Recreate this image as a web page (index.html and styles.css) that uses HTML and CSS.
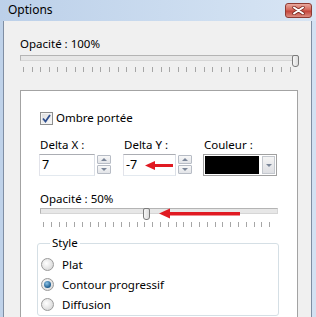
FILE: index.html
```html
<!DOCTYPE html>
<html lang="fr">
<head>
    <meta charset="UTF-8">
    <title>Options</title>
    <link rel="stylesheet" href="styles.css">
</head>
<body>
    <div class="window">
        <div class="titlebar">
            <span class="title">Options</span>
            <div class="close">
                <svg width="13" height="9" viewBox="0 0 13 9">
                    <path d="M2 1.5 L11 7.5 M11 1.5 L2 7.5" stroke="#7a2a22" stroke-width="3.4" stroke-linecap="round"/>
                    <path d="M2 1.5 L11 7.5 M11 1.5 L2 7.5" stroke="#ffffff" stroke-width="2" stroke-linecap="round"/>
                </svg>
            </div>
        </div>

        <div class="client">
            <div class="label">Opacité : 100%</div>
            <div class="slider slider-main">
                <div class="track"></div>
                <div class="thumb" style="left: 272px"></div>
                <div class="ticks"></div>
            </div>

            <div class="panel">
                <label class="check">
                    <span class="checkbox">
                        <svg width="9" height="9" viewBox="0 0 9 9">
                            <path d="M1 4.5 L3.5 7.5 L8 1" fill="none" stroke="#2f4f8f" stroke-width="1.8"/>
                        </svg>
                    </span>
                    Ombre portée
                </label>

                <div class="fields">
                    <div class="col col-x">
                        <div class="label">Delta X :</div>
                        <div class="spin">
                            <div class="input">7</div>
                            <div class="spin-btns">
                                <span class="spin-btn"><i class="up"></i></span>
                                <span class="spin-btn"><i class="down"></i></span>
                            </div>
                        </div>
                    </div>
                    <div class="col col-y">
                        <div class="label">Delta Y :</div>
                        <div class="spin">
                            <div class="input">-7</div>
                            <div class="spin-btns">
                                <span class="spin-btn"><i class="up"></i></span>
                                <span class="spin-btn"><i class="down"></i></span>
                            </div>
                        </div>
                    </div>
                    <div class="col col-color">
                        <div class="label">Couleur :</div>
                        <div class="color">
                            <div class="swatch"></div>
                            <div class="drop"><i class="down"></i></div>
                        </div>
                    </div>
                </div>

                <div class="label label-sub">Opacité : 50%</div>
                <div class="slider slider-sub">
                    <div class="track"></div>
                    <div class="thumb" style="left: 103px"></div>
                    <div class="ticks"></div>
                </div>

                <fieldset class="group">
                    <legend>Style</legend>
                    <label class="radio"><span class="dot"></span>Plat</label>
                    <label class="radio"><span class="dot checked"></span>Contour progressif</label>
                    <label class="radio"><span class="dot"></span>Diffusion</label>
                </fieldset>

                <!-- annotation arrows -->
                <svg class="arrow arrow-y" width="28" height="11" viewBox="0 0 28 11">
                    <path d="M0 5.5 L10 1 L10 10 Z" fill="#e01a22"/>
                    <rect x="9" y="4" width="19" height="3" fill="#e01a22"/>
                </svg>
                <svg class="arrow arrow-op" width="81" height="11" viewBox="0 0 81 11">
                    <path d="M0 5.5 L11 0.5 L11 10.5 Z" fill="#e01a22"/>
                    <rect x="10" y="4" width="71" height="3.5" fill="#e01a22"/>
                </svg>
            </div>
        </div>
    </div>
</body>
</html>
```

FILE: styles.css
```css
/* Base */
* {
    margin: 0;
    padding: 0;
    box-sizing: border-box;
}

body {
    font-family: 'Noto Sans', 'Open Sans', sans-serif;
    font-size: 11.5px;
    color: #000000;
    background-color: #cfdcec;
}

/* Window frame */
.window {
    width: 316px;
    height: 317px;
    overflow: hidden;
    display: flex;
    flex-direction: column;
    background: linear-gradient(to right, #bfd2e9, #d3e1f2);
}

.titlebar {
    height: 21px;
    flex: none;
    display: flex;
    align-items: center;
    justify-content: space-between;
    padding: 0 4px 0 8px;
    background: linear-gradient(to right, #bcd0e9, #cfdff1 70%, #d8e5f4);
}

.title {
    line-height: 16px;
    margin-top: -1px;
    font-size: 12px;
}

.close {
    width: 27px;
    height: 15px;
    border: 1px solid #8e3a32;
    border-radius: 3px;
    display: flex;
    align-items: center;
    justify-content: center;
    background: linear-gradient(#e9a99e, #d4675a 45%, #c3443a 55%, #dc8c80);
}

.client {
    flex: 1;
    margin: 0 4px 0 3px;
    border-left: 1px solid #7f8ea3;
    border-right: 1px solid #7f8ea3;
    background-color: #f0f0f0;
    padding: 15px 13px 0 16px;
    overflow: hidden;
}

.label {
    line-height: 16px;
    height: 16px;
}

/* Sliders */
.slider {
    position: relative;
    height: 21px;
}

.slider-main {
    margin-top: 1px;
}

.track {
    height: 6px;
    margin-top: 3px;
    border: 1px solid #b4b4b4;
    border-right-color: #d6d6d6;
    border-bottom-color: #d6d6d6;
    background-color: #e7e7e7;
}

.ticks {
    height: 5px;
    margin: 6px 2px 0 3px;
    background: repeating-linear-gradient(to right, #a6a6a6 0, #a6a6a6 1px, transparent 1px, transparent 8.6px);
}

.thumb {
    position: absolute;
    top: 0;
    width: 7px;
    height: 12px;
    border: 1px solid #7b7b7b;
    border-radius: 2px 2px 3px 3px;
    background: linear-gradient(to right, #f6f6f6, #dcdcdc);
}

/* Inner panel */
.panel {
    position: relative;
    margin-top: 14px;
    height: 260px;
    background-color: #ffffff;
    border: 1px solid #a3a3a3;
    padding: 19px 0 0 18px;
}

.check {
    display: flex;
    align-items: center;
    gap: 3px;
    margin-left: 1px;
    line-height: 16px;
}

.checkbox {
    width: 13px;
    height: 13px;
    border: 1px solid #8e8f8f;
    background: linear-gradient(135deg, #dcdcdc, #fbfbfb);
    display: flex;
    align-items: center;
    justify-content: center;
    box-shadow: inset 0 0 0 1px #f4f4f4;
}

.fields {
    display: flex;
    margin-top: 11px;
}

.col .label {
    padding-left: 1px;
}

.col-x {
    width: 84px;
}

.col-y {
    width: 80px;
}

.spin {
    display: flex;
    margin-top: 1px;
}

.input {
    height: 22px;
    border: 1px solid #abadb3;
    border-left-color: #e2e3ea;
    border-right-color: #dbdfe6;
    border-bottom-color: #e3e9ef;
    padding-left: 2px;
    line-height: 20px;
    font-size: 12.5px;
}

.col-x .input {
    width: 56px;
}

.col-y .input {
    width: 53px;
}

.spin-btns {
    display: flex;
    flex-direction: column;
    gap: 1px;
    margin-left: 2px;
    padding-top: 1px;
}

.spin-btn {
    width: 14px;
    height: 9px;
    border: 1px solid #b7bcc5;
    border-radius: 1px;
    background: linear-gradient(#f8f8f8, #e2e4e8);
    display: flex;
    align-items: center;
    justify-content: center;
}

.up, .down {
    width: 0;
    height: 0;
    border-left: 3px solid transparent;
    border-right: 3px solid transparent;
}

.up {
    border-bottom: 3px solid #7a8598;
}

.down {
    border-top: 3px solid #7a8598;
}

.color {
    display: flex;
    gap: 3px;
    width: 74px;
    height: 22px;
    margin-top: 1px;
    padding: 1px;
    border: 1px solid #a0a0a0;
}

.swatch {
    width: 54px;
    background-color: #000000;
}

.drop {
    width: 13px;
    border: 1px solid #c4c8ce;
    background: linear-gradient(#f4f4f4, #dedfe3);
    display: flex;
    align-items: center;
    justify-content: center;
}

.label-sub {
    margin-top: 15px;
    padding-left: 1px;
}

.slider-sub {
    width: 238px;
    margin-left: 1px;
    margin-top: 1px;
}

.slider-sub .track {
    margin-top: 1px;
}

.slider-sub .ticks {
    margin-top: 8px;
    background: repeating-linear-gradient(to right, #a6a6a6 0, #a6a6a6 1px, transparent 1px, transparent 7.8px);
}

/* Style group */
.group {
    width: 242px;
    margin: 6px 0 0 -2px;
    border: 1px solid #d5dfe5;
    border-radius: 3px;
    padding: 3px 0 1px 3px;
}

.group legend {
    margin-left: 9px;
    padding: 0 2px;
    line-height: 16px;
}

.radio {
    display: flex;
    align-items: center;
    gap: 8px;
    height: 20px;
}

.dot {
    width: 13px;
    height: 13px;
    border-radius: 50%;
    border: 1px solid #9a9a9a;
    background: radial-gradient(circle at 40% 40%, #ffffff, #d8d8d8 80%);
    display: flex;
    align-items: center;
    justify-content: center;
}

.dot.checked::after {
    content: '';
    width: 7px;
    height: 7px;
    border-radius: 50%;
    background: radial-gradient(circle at 40% 35%, #8cc3e6, #1c5a8c 70%);
}

/* Annotation arrows */
.arrow {
    position: absolute;
}

.arrow-y {
    left: 124px;
    top: 69px;
}

.arrow-op {
    left: 138px;
    top: 117px;
}
```
